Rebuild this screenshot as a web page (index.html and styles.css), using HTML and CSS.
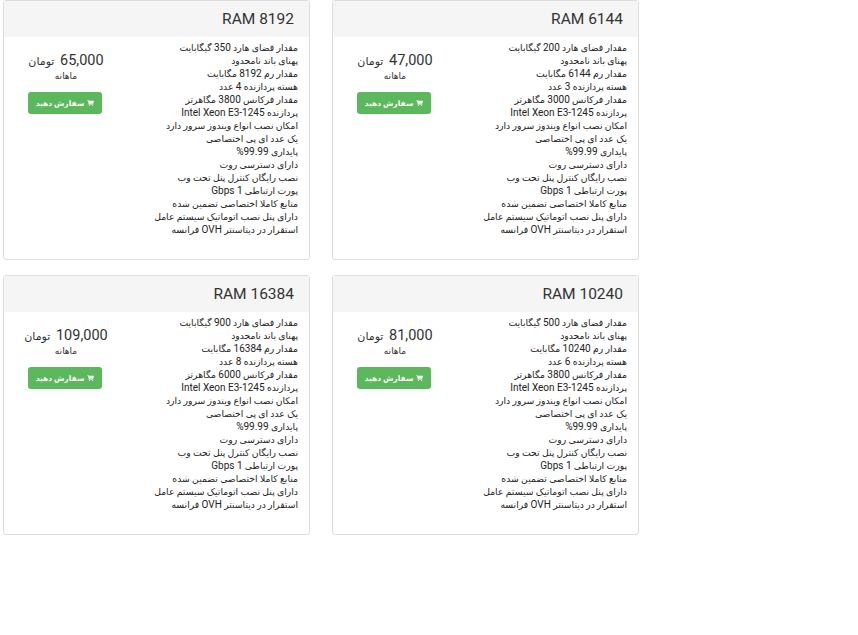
FILE: index.html
```html
<!DOCTYPE html>
<html lang="fa">
<head>
    <meta charset="UTF-8">
    <title>RAM</title>
    <link rel="stylesheet" href="styles.css">
</head>
<body>

<div class="plans" dir="rtl">

  <div class="plan">
    <div class="plan-head">RAM 6144</div>
    <div class="plan-body">
      <ul class="specs">
        <li>مقدار فضای هارد <span class="lat">200</span> گیگابایت</li>
        <li>پهنای باند نامحدود</li>
        <li>مقدار رم <span class="lat">6144</span> مگابایت</li>
        <li>هسته پردازنده <span class="lat">3</span> عدد</li>
        <li>مقدار فرکانس <span class="lat">3000</span> مگاهرتز</li>
        <li>پردازنده <span class="lat">Intel Xeon E3-1245</span></li>
        <li>امکان نصب انواع ویندوز سرور دارد</li>
        <li>یک عدد ای پی اختصاصی</li>
        <li>پایداری <span class="lat">99.99%</span></li>
        <li>دارای دسترسی روت</li>
        <li>نصب رایگان کنترل پنل تحت وب</li>
        <li>پورت ارتباطی <span class="lat">1 Gbps</span></li>
        <li>منابع کاملا اختصاصی تضمین شده</li>
        <li>دارای پنل نصب اتوماتیک سیستم عامل</li>
        <li>استقرار در دیتاسنتر <span class="lat">OVH</span> فرانسه</li>
      </ul>
      <div class="order">
        <div class="price">47,000 <span class="unit">تومان</span></div>
        <div class="period">ماهانه</div>
        <a class="btn" href="#"><svg class="cart" viewBox="0 0 16 14"><path d="M0 0h3l.5 2H16l-1.500 6.500H5l.3 1.500H14.500v1.200H4L2.200 1.300H0z"/><circle cx="5.500" cy="12.800" r="1.200"/><circle cx="13" cy="12.800" r="1.200"/></svg>سفارش دهید</a>
      </div>
    </div>
  </div>

  <div class="plan">
    <div class="plan-head">RAM 8192</div>
    <div class="plan-body">
      <ul class="specs">
        <li>مقدار فضای هارد <span class="lat">350</span> گیگابایت</li>
        <li>پهنای باند نامحدود</li>
        <li>مقدار رم <span class="lat">8192</span> مگابایت</li>
        <li>هسته پردازنده <span class="lat">4</span> عدد</li>
        <li>مقدار فرکانس <span class="lat">3800</span> مگاهرتز</li>
        <li>پردازنده <span class="lat">Intel Xeon E3-1245</span></li>
        <li>امکان نصب انواع ویندوز سرور دارد</li>
        <li>یک عدد ای پی اختصاصی</li>
        <li>پایداری <span class="lat">99.99%</span></li>
        <li>دارای دسترسی روت</li>
        <li>نصب رایگان کنترل پنل تحت وب</li>
        <li>پورت ارتباطی <span class="lat">1 Gbps</span></li>
        <li>منابع کاملا اختصاصی تضمین شده</li>
        <li>دارای پنل نصب اتوماتیک سیستم عامل</li>
        <li>استقرار در دیتاسنتر <span class="lat">OVH</span> فرانسه</li>
      </ul>
      <div class="order">
        <div class="price">65,000 <span class="unit">تومان</span></div>
        <div class="period">ماهانه</div>
        <a class="btn" href="#"><svg class="cart" viewBox="0 0 16 14"><path d="M0 0h3l.5 2H16l-1.500 6.500H5l.3 1.500H14.500v1.200H4L2.200 1.300H0z"/><circle cx="5.500" cy="12.800" r="1.200"/><circle cx="13" cy="12.800" r="1.200"/></svg>سفارش دهید</a>
      </div>
    </div>
  </div>

  <div class="plan">
    <div class="plan-head">RAM 10240</div>
    <div class="plan-body">
      <ul class="specs">
        <li>مقدار فضای هارد <span class="lat">500</span> گیگابایت</li>
        <li>پهنای باند نامحدود</li>
        <li>مقدار رم <span class="lat">10240</span> مگابایت</li>
        <li>هسته پردازنده <span class="lat">6</span> عدد</li>
        <li>مقدار فرکانس <span class="lat">3800</span> مگاهرتز</li>
        <li>پردازنده <span class="lat">Intel Xeon E3-1245</span></li>
        <li>امکان نصب انواع ویندوز سرور دارد</li>
        <li>یک عدد ای پی اختصاصی</li>
        <li>پایداری <span class="lat">99.99%</span></li>
        <li>دارای دسترسی روت</li>
        <li>نصب رایگان کنترل پنل تحت وب</li>
        <li>پورت ارتباطی <span class="lat">1 Gbps</span></li>
        <li>منابع کاملا اختصاصی تضمین شده</li>
        <li>دارای پنل نصب اتوماتیک سیستم عامل</li>
        <li>استقرار در دیتاسنتر <span class="lat">OVH</span> فرانسه</li>
      </ul>
      <div class="order">
        <div class="price">81,000 <span class="unit">تومان</span></div>
        <div class="period">ماهانه</div>
        <a class="btn" href="#"><svg class="cart" viewBox="0 0 16 14"><path d="M0 0h3l.5 2H16l-1.500 6.500H5l.3 1.500H14.500v1.200H4L2.200 1.300H0z"/><circle cx="5.500" cy="12.800" r="1.200"/><circle cx="13" cy="12.800" r="1.200"/></svg>سفارش دهید</a>
      </div>
    </div>
  </div>

  <div class="plan">
    <div class="plan-head">RAM 16384</div>
    <div class="plan-body">
      <ul class="specs">
        <li>مقدار فضای هارد <span class="lat">900</span> گیگابایت</li>
        <li>پهنای باند نامحدود</li>
        <li>مقدار رم <span class="lat">16384</span> مگابایت</li>
        <li>هسته پردازنده <span class="lat">8</span> عدد</li>
        <li>مقدار فرکانس <span class="lat">6000</span> مگاهرتز</li>
        <li>پردازنده <span class="lat">Intel Xeon E3-1245</span></li>
        <li>امکان نصب انواع ویندوز سرور دارد</li>
        <li>یک عدد ای پی اختصاصی</li>
        <li>پایداری <span class="lat">99.99%</span></li>
        <li>دارای دسترسی روت</li>
        <li>نصب رایگان کنترل پنل تحت وب</li>
        <li>پورت ارتباطی <span class="lat">1 Gbps</span></li>
        <li>منابع کاملا اختصاصی تضمین شده</li>
        <li>دارای پنل نصب اتوماتیک سیستم عامل</li>
        <li>استقرار در دیتاسنتر <span class="lat">OVH</span> فرانسه</li>
      </ul>
      <div class="order">
        <div class="price">109,000 <span class="unit">تومان</span></div>
        <div class="period">ماهانه</div>
        <a class="btn" href="#"><svg class="cart" viewBox="0 0 16 14"><path d="M0 0h3l.5 2H16l-1.500 6.500H5l.3 1.500H14.500v1.200H4L2.200 1.300H0z"/><circle cx="5.500" cy="12.800" r="1.200"/><circle cx="13" cy="12.800" r="1.200"/></svg>سفارش دهید</a>
      </div>
    </div>
  </div>

</div>

</body>
</html>
```

FILE: styles.css
```css
body {
    margin: 0;
    font-family: Roboto, "DejaVu Sans", sans-serif;
    color: #333;
}

.plans {
    display: grid;
    grid-template-columns: 307px 307px;
    column-gap: 22px;
    row-gap: 15px;
    width: 636px;
    margin-left: 3px;
}

.plan {
    height: 260px;
    box-sizing: border-box;
    border: 1px solid #ddd;
    border-radius: 3px;
    background: #fff;
}

.plan-head {
    height: 36px;
    padding-right: 15px;
    background: #f5f5f5;
    font-size: 15.500px;
    line-height: 36px;
    direction: ltr;
    text-align: right;
}

.plan-body {
    display: flex;
    padding: 4px 11px 0 0;
}

.specs {
    flex: 1;
    margin: 0;
    padding: 0;
    list-style: none;
    color: #222;
    font-size: 9.250px;
    line-height: 13px;
}

.lat {
    font-size: 10px;
}

.order {
    width: 124px;
    text-align: center;
}

.price {
    margin-top: 10px;
    font-size: 14.500px;
    line-height: 20px;
}

.unit {
    margin-right: 2px;
    font-size: 11px;
}

.period {
    margin-top: -2px;
    font-size: 9px;
    line-height: 13px;
}

.btn {
    display: flex;
    align-items: center;
    justify-content: center;
    gap: 3px;
    width: 74px;
    height: 22px;
    margin: 9px 26px 0 24px;
    border-radius: 3px;
    background: #5cb85c;
    color: #fff;
    font-size: 7.500px;
    font-weight: bold;
    text-decoration: none;
}

.cart {
    width: 7px;
    height: 6px;
    fill: #fff;
}
```
